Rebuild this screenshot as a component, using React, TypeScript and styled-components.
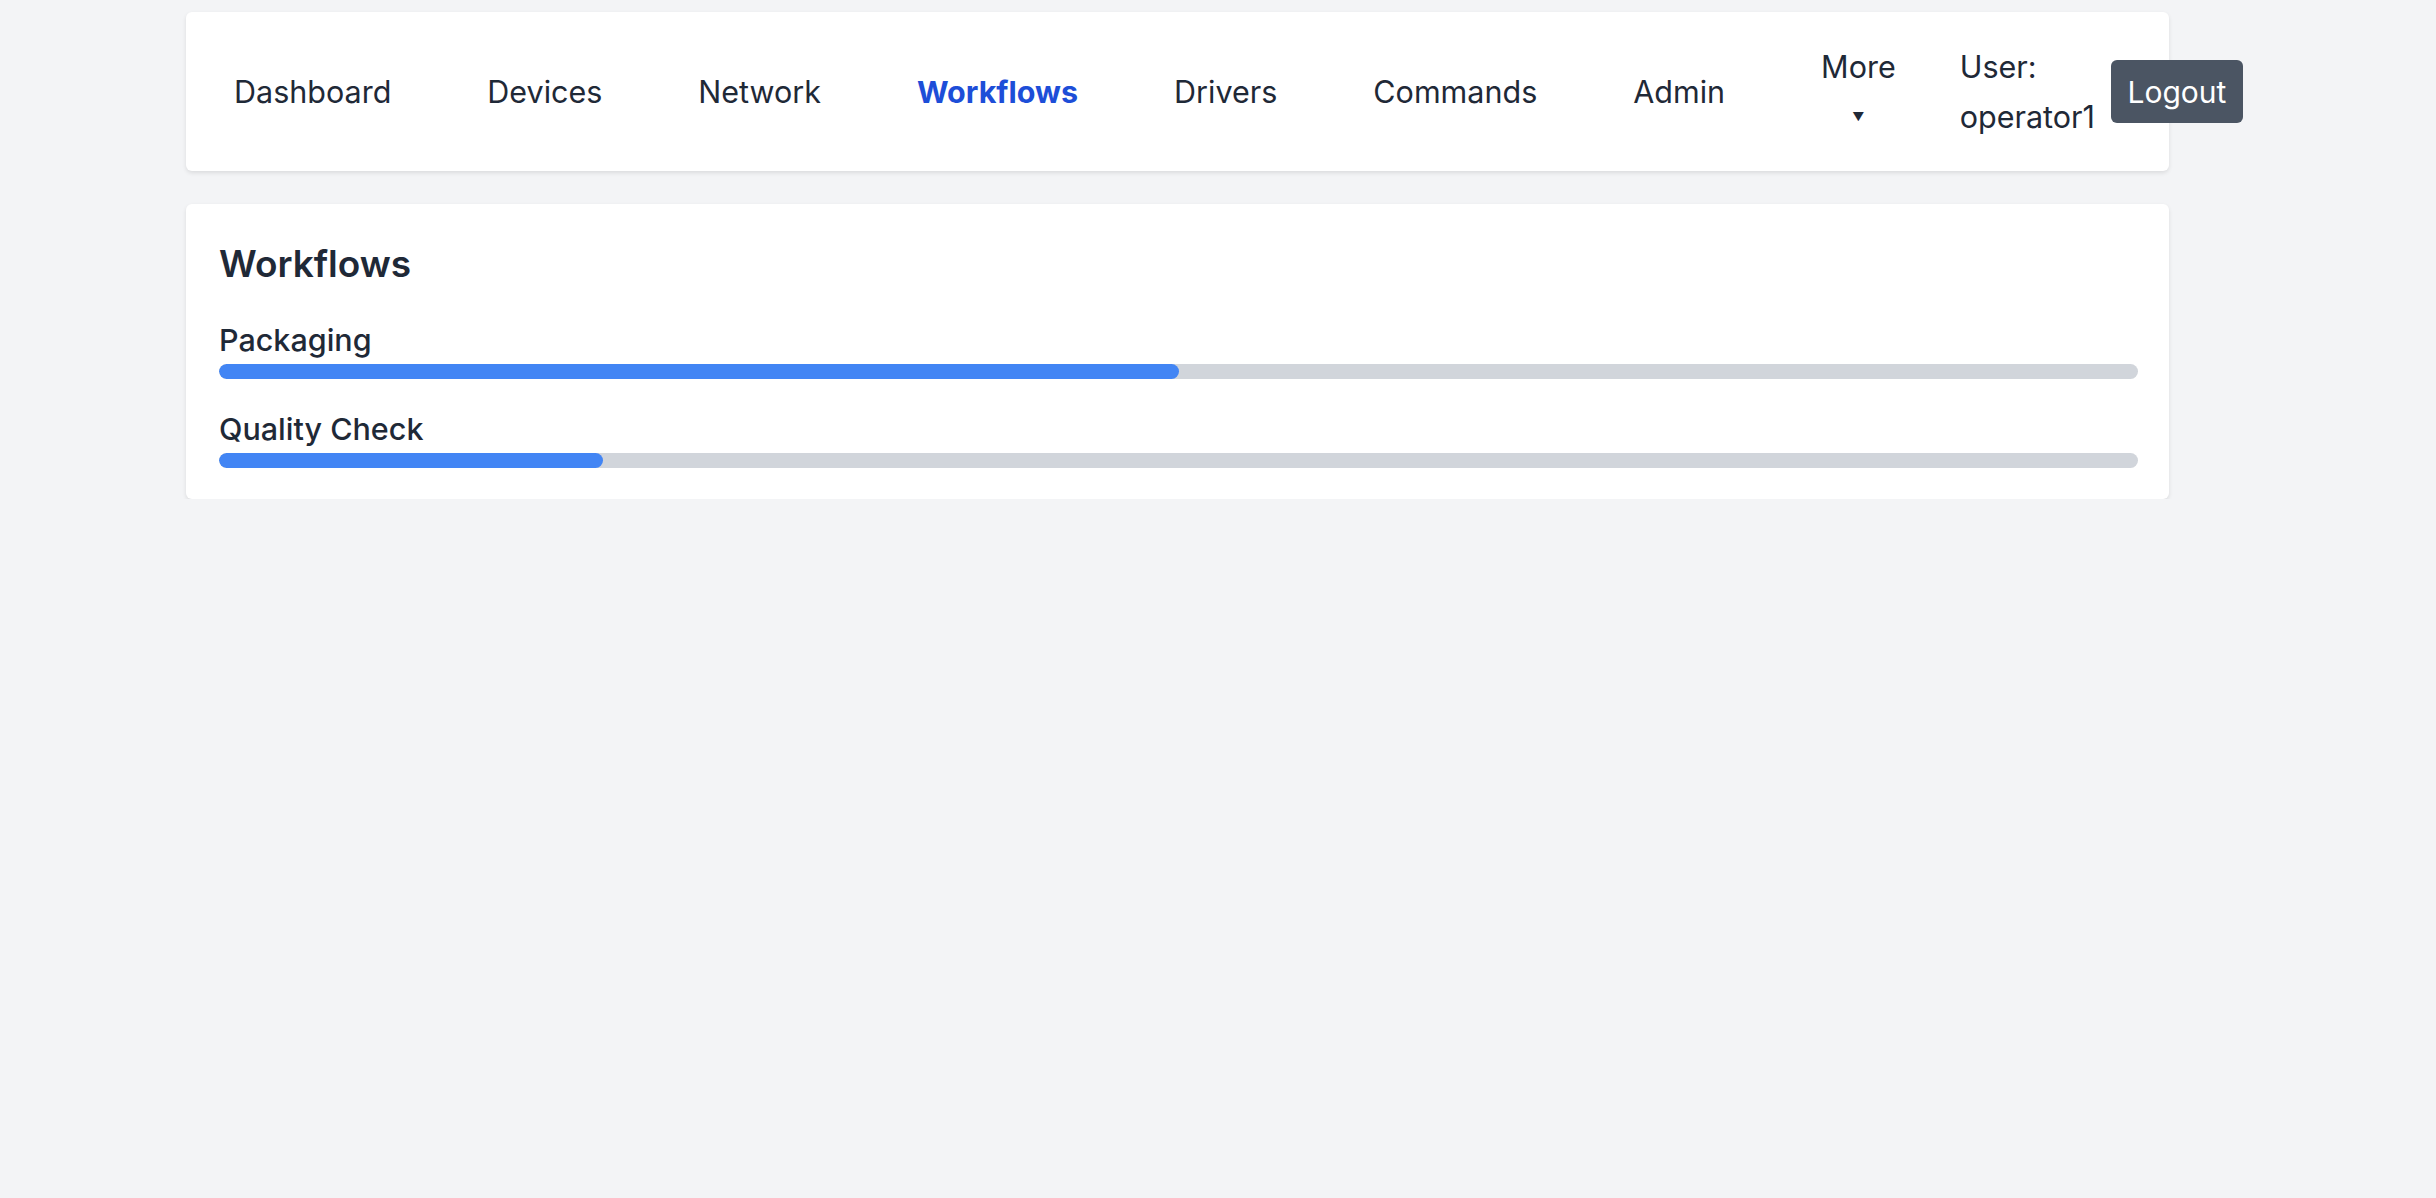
import styled, { createGlobalStyle } from "styled-components";

const GlobalStyle = createGlobalStyle`
  html, body {
    margin: 0;
    background: #f3f4f6;
    font-family: Inter, "Noto Sans", sans-serif;
    color: #1f2937;
  }
`;

const links = ["Dashboard", "Devices", "Network", "Workflows", "Drivers", "Commands", "Admin"];

const workflows = [
  { name: "Packaging", progress: 50 },
  { name: "Quality Check", progress: 20 },
];

export default function App() {
  return (
    <>
      <GlobalStyle />
      <StyledPage>
        <StyledNav>
          {links.map((l) => (
            <StyledLink key={l} $active={l === "Workflows"}>
              {l}
            </StyledLink>
          ))}
          <StyledMore>
            <span>More</span>
            <StyledCaret>▼</StyledCaret>
          </StyledMore>
          <StyledUser>User: operator1</StyledUser>
          <StyledLogout>Logout</StyledLogout>
        </StyledNav>
        <StyledCard>
          <StyledTitle>Workflows</StyledTitle>
          {workflows.map((w) => (
            <StyledItem key={w.name}>
              <StyledLabel>{w.name}</StyledLabel>
              <StyledTrack>
                <StyledFill style={{ width: `${w.progress}%` }} />
              </StyledTrack>
            </StyledItem>
          ))}
        </StyledCard>
      </StyledPage>
    </>
  );
}

const StyledPage = styled.div`
  display: flex;
  flex-direction: column;
  gap: 33px;
  width: 1983px;
  padding: 12px 0 0 186px;
`;

const StyledNav = styled.nav`
  display: flex;
  align-items: center;
  height: 159px;
  background: #fff;
  border-radius: 6px;
  box-shadow: 0 2px 4px rgba(0, 0, 0, 0.1);
  font-size: 30.5px;
  line-height: 50px;
`;

const StyledLink = styled.a<{ $active?: boolean }>`
  padding: 0 48px;
  color: ${(p) => (p.$active ? "#1d4ed8" : "#1f2937")};
  font-weight: ${(p) => (p.$active ? 700 : 400)};
  white-space: nowrap;
  cursor: pointer;
`;

const StyledMore = styled.div`
  display: flex;
  flex-direction: column;
  align-items: center;
  padding: 0 64px 0 48px;
`;

const StyledCaret = styled.span`
  font-size: 12px;
`;

const StyledUser = styled.span`
  width: 140px;
  margin-right: 16px;
`;

const StyledLogout = styled.button`
  flex-shrink: 0;
  width: 132px;
  height: 63px;
  border: none;
  border-radius: 6px;
  background: #4b5563;
  color: #fff;
  font: inherit;
  font-size: 30px;
`;

const StyledCard = styled.div`
  background: #fff;
  border-radius: 6px;
  box-shadow: 0 2px 4px rgba(0, 0, 0, 0.1);
  padding: 33px 31px 31px 33px;
`;

const StyledTitle = styled.h2`
  margin: 0 0 28px;
  font-size: 37px;
  font-weight: 600;
  line-height: 54px;
`;

const StyledItem = styled.div`
  & + & {
    margin-top: 29px;
  }
`;

const StyledLabel = styled.div`
  font-size: 30.5px;
  line-height: 42px;
  font-weight: 500;
  margin-bottom: 3px;
`;

const StyledTrack = styled.div`
  height: 15px;
  background: #d1d5db;
  border-radius: 8px;
  overflow: hidden;
`;

const StyledFill = styled.div`
  height: 100%;
  background: #4285f4;
  border-radius: 8px;
`;
